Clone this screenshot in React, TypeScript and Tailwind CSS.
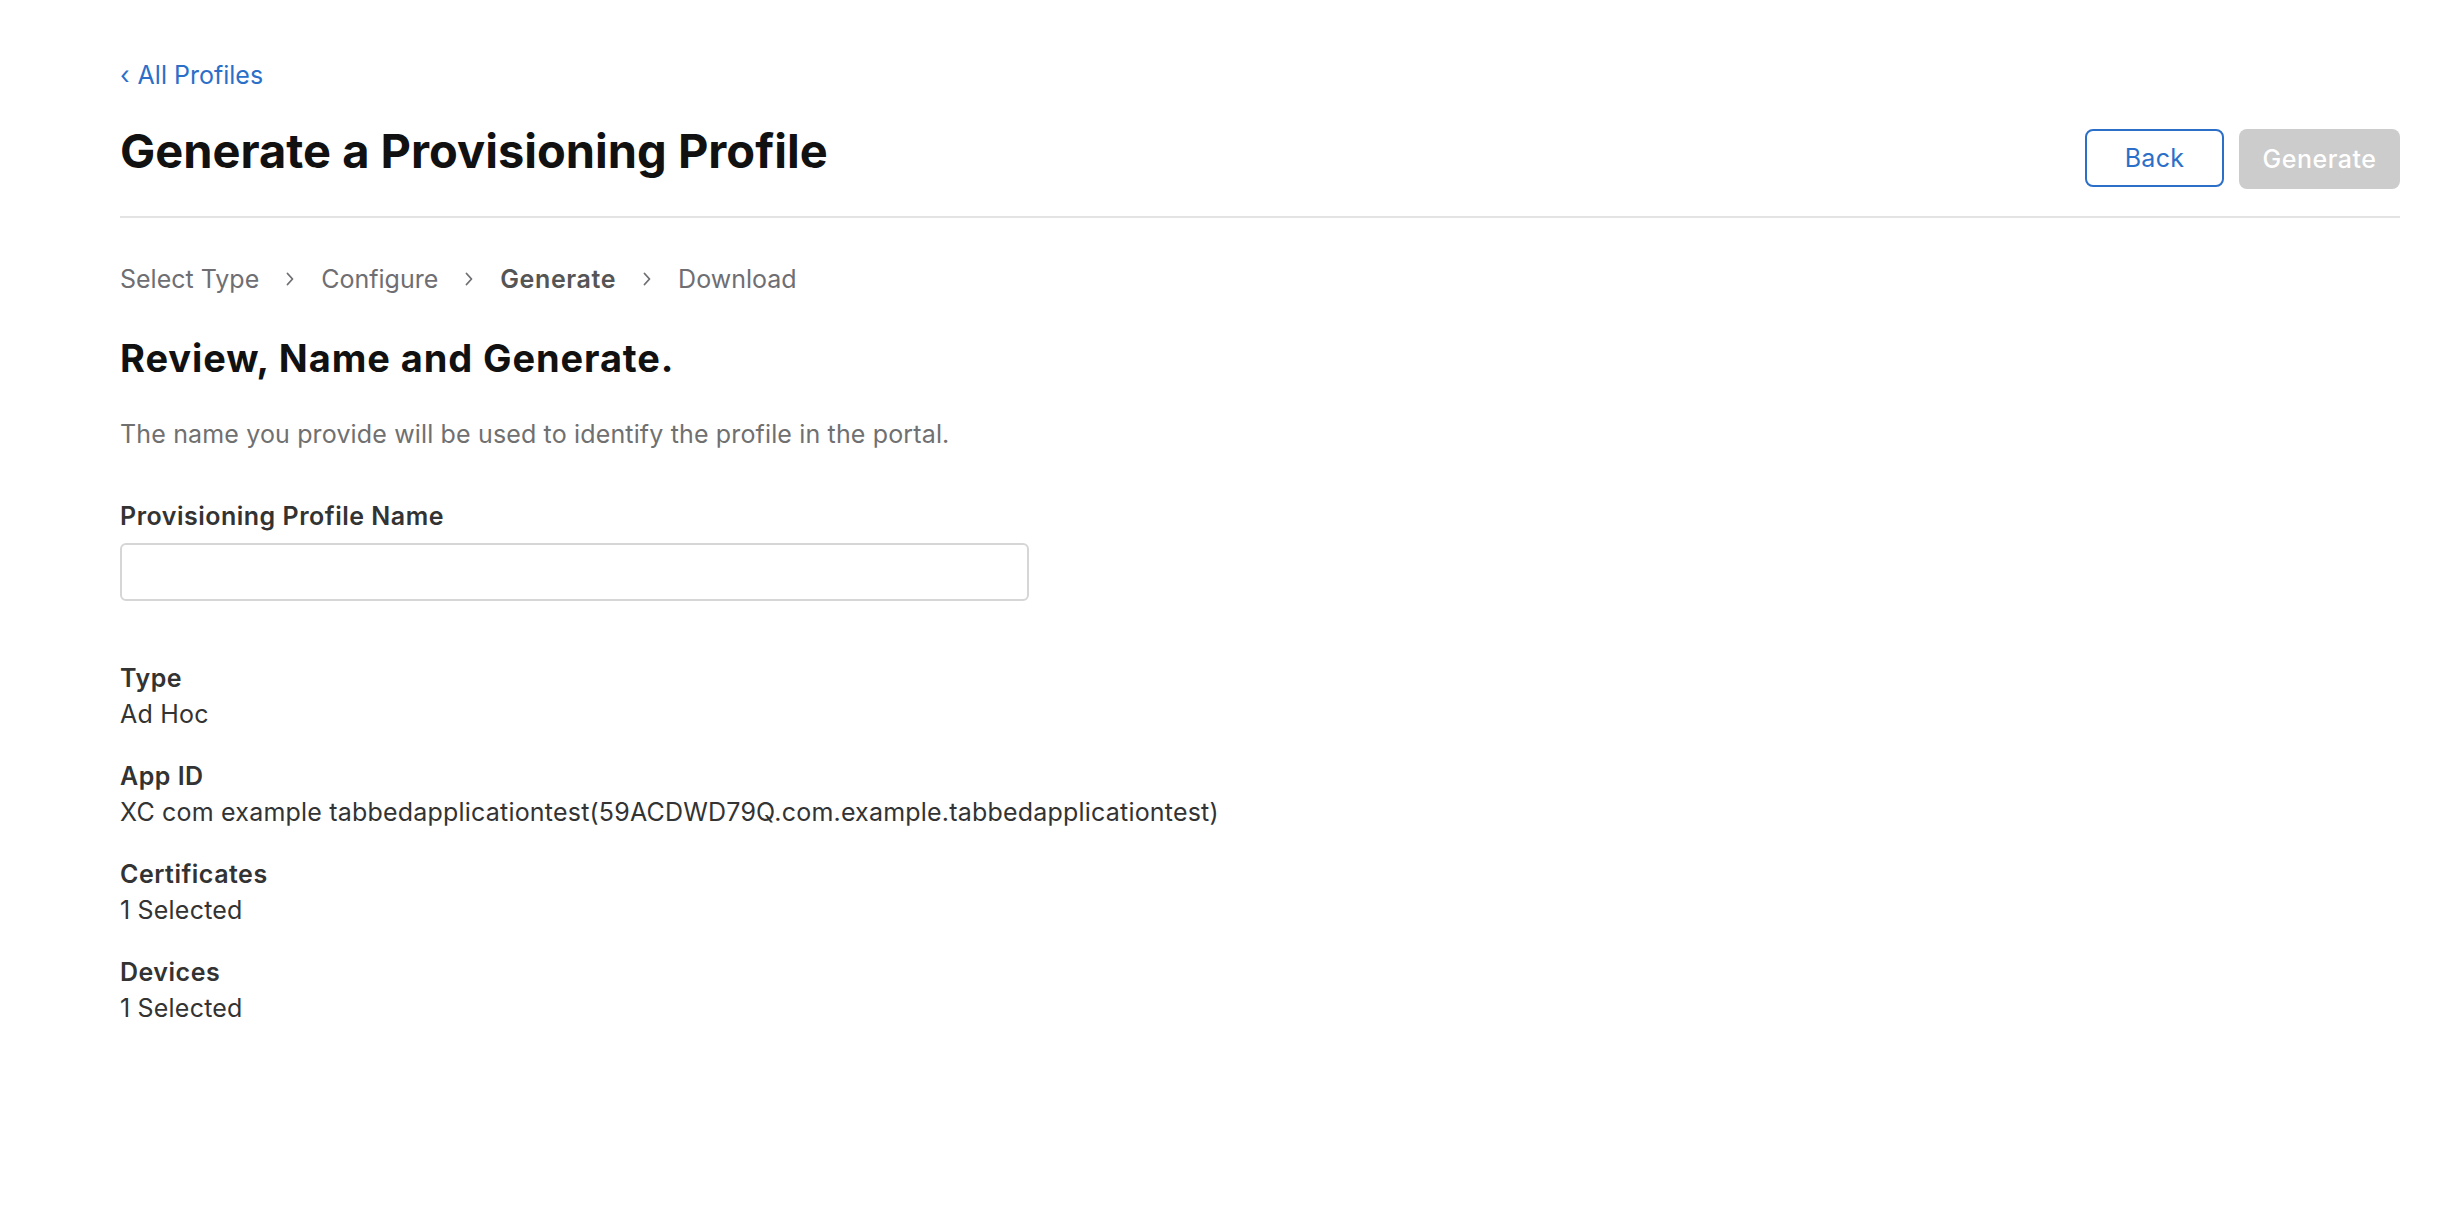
import React from "react";

const steps = [
  { label: "Select Type", active: false },
  { label: "Configure", active: false },
  { label: "Generate", active: true },
  { label: "Download", active: false },
];

const details = [
  { label: "Type", value: "Ad Hoc" },
  {
    label: "App ID",
    value:
      "XC com example tabbedapplicationtest(59ACDWD79Q.com.example.tabbedapplicationtest)",
  },
  { label: "Certificates", value: "1 Selected" },
  { label: "Devices", value: "1 Selected" },
];

const Chevron: React.FC = () => (
  <svg width="10" height="16" viewBox="0 0 10 16" className="mx-[26px]">
    <path
      d="M2.5 2.5 L7.5 8 L2.5 13.5"
      fill="none"
      stroke="#6e6e73"
      strokeWidth="1.8"
      strokeLinecap="round"
      strokeLinejoin="round"
    />
  </svg>
);

export default function App() {
  return (
    <div className="min-h-screen bg-white pl-[120px] pr-[42px] pt-[57px] font-['Inter','Noto_Sans',sans-serif] text-[#333333]">
      <a className="flex items-center text-[25px] leading-[36px] text-[#2b6fc9]">
        <span className="mr-[8px]">‹</span>All Profiles
      </a>

      <div className="mt-[32px] flex items-end justify-between border-b-2 border-[#e3e3e3] pb-[27px]">
        <h1 className="mb-[12px] text-[47px] font-bold leading-[52px] text-[#111111]">
          Generate a Provisioning Profile
        </h1>
        <div className="flex gap-[15px]">
          <button className="h-[58px] w-[139px] rounded-[8px] border-2 border-[#2b6fc9] pt-[2px] text-[25px] tracking-[0.3px] text-[#2b6fc9]">
            Back
          </button>
          <button className="h-[60px] w-[161px] rounded-[8px] bg-[#cccccc] pt-[2px] text-[25px] font-medium tracking-[0.5px] text-white">
            Generate
          </button>
        </div>
      </div>

      <div className="mt-[43px] flex items-center text-[25px] leading-[36px] text-[#6e6e73]">
        {steps.map((s, i) => (
          <React.Fragment key={s.label}>
            {i > 0 && <Chevron />}
            <span
              className={
                s.active ? "font-semibold tracking-[0.6px] text-[#555555]" : ""
              }
            >
              {s.label}
            </span>
          </React.Fragment>
        ))}
      </div>

      <h2 className="mt-[39px] text-[38px] font-bold leading-[44px] tracking-[0.9px] text-[#111111]">
        Review, Name and Generate.
      </h2>

      <p className="mt-[36px] text-[25px] leading-[36px] tracking-[0.15px] text-[#707070]">
        The name you provide will be used to identify the profile in the portal.
      </p>

      <label className="mt-[46px] block text-[25px] font-semibold leading-[36px] tracking-[0.5px] text-[#333333]">
        Provisioning Profile Name
      </label>
      <input
        type="text"
        className="mt-[9px] block h-[58px] w-[909px] rounded-[6px] border-2 border-[#d6d6d6] px-4 text-[24px] outline-none"
      />

      <div className="mt-[59px] flex flex-col gap-[26px]">
        {details.map((d) => (
          <div key={d.label} className="text-[25px] leading-[36px]">
            <div className="font-semibold tracking-[0.5px] text-[#333333]">
              {d.label}
            </div>
            <div className="tracking-[0.2px] text-[#333333]">{d.value}</div>
          </div>
        ))}
      </div>
    </div>
  );
}
